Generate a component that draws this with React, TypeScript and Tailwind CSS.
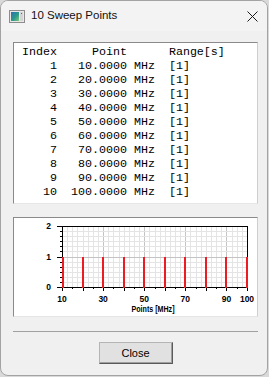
import React from "react";

// Sweep point rows shown in the list box (fixed-width text, like the original dialog)
const rows = Array.from({ length: 10 }, (_, i) => {
  const idx = String(i + 1).padStart(5, " ");
  const freq = ((i + 1) * 10).toFixed(4).padStart(8, " ");
  return `${idx}  ${freq} MHz  [1]`;
});

// chart geometry, in the coordinates of the chart box interior
const X0 = 48;
const X1 = 233;
const YTOP = 8;
const YBOT = 69;
const xOf = (mhz: number) => X0 + ((mhz - 10) * (X1 - X0)) / 90;
const yOf = (v: number) => YBOT - (v * (YBOT - YTOP)) / 2;
const px = (n: number) => Math.round(n) + 0.5;

function TitleIcon() {
  return (
    <svg width="16" height="13" viewBox="0 0 16 13">
      <defs>
        <linearGradient id="ig" x1="0" y1="0" x2="1" y2="1">
          <stop offset="0" stopColor="#2d6fb3" />
          <stop offset="0.55" stopColor="#2a9a8a" />
          <stop offset="1" stopColor="#7fc97a" />
        </linearGradient>
      </defs>
      <rect x="0.5" y="0.5" width="15" height="12" fill="#e8e8e8" stroke="#8c8c8c" />
      <rect x="2" y="2" width="8" height="9" fill="url(#ig)" />
      <rect x="11" y="2" width="3" height="9" fill="#d4d4d4" />
      <rect x="12" y="3" width="1" height="1" fill="#2d6fb3" />
    </svg>
  );
}

function SweepChart() {
  const vMinor: number[] = [];
  for (let m = 12.5; m < 100; m += 2.5) vMinor.push(m);
  const hMinor: number[] = [];
  for (let k = 1; k < 12; k++) hMinor.push(k / 6);
  const xTicks: number[] = [];
  for (let m = 10; m <= 100; m += 5) xTicks.push(m);
  const yTicks: number[] = [];
  for (let k = 0; k <= 12; k++) yTicks.push(k / 6);

  return (
    <svg width="243" height="98" viewBox="0 0 243 98" shapeRendering="crispEdges">
      {/* minor grid */}
      {vMinor.map((m) => (
        <line
          key={"v" + m}
          x1={px(xOf(m))}
          x2={px(xOf(m))}
          y1={YTOP}
          y2={YBOT}
          stroke={[30, 50, 70, 90].includes(m) ? "#c4c4c4" : "#e4e4e4"}
        />
      ))}
      {hMinor.map((v) => (
        <line
          key={"h" + v}
          x1={X0}
          x2={X1}
          y1={px(yOf(v))}
          y2={px(yOf(v))}
          stroke={Math.abs(v - 1) < 0.01 ? "#c4c4c4" : "#e4e4e4"}
        />
      ))}
      {/* frame */}
      <rect x={X0 + 0.5} y={YTOP + 0.5} width={X1 - X0} height={YBOT - YTOP} fill="none" stroke="#000" />
      {/* y ticks */}
      {yTicks.map((v, k) => (
        <line
          key={"yt" + k}
          x1={X0 - (k % 6 === 0 ? 5 : 2)}
          x2={X0}
          y1={px(yOf(v))}
          y2={px(yOf(v))}
          stroke="#000"
        />
      ))}
      {/* x ticks */}
      {xTicks.map((m) => (
        <line
          key={"xt" + m}
          x1={px(xOf(m))}
          x2={px(xOf(m))}
          y1={YBOT}
          y2={YBOT + (m % 10 === 0 ? 4 : 2)}
          stroke="#000"
        />
      ))}
      {/* bars */}
      {[10, 20, 30, 40, 50, 60, 70, 80, 90, 100].map((m) => (
        <rect
          key={"b" + m}
          x={Math.round(xOf(m)) - (m === 100 ? 1 : m === 10 ? 0 : 1)}
          y={Math.round(yOf(1))}
          width={m === 10 || m === 100 ? 1.5 : 2}
          height={YBOT - Math.round(yOf(1)) + 1}
          fill="#ed1c24"
        />
      ))}
      <g fontFamily="'Liberation Sans', Arial, sans-serif" fontSize="8.5" fontWeight="bold" fill="#000" shapeRendering="auto">
        {[2, 1, 0].map((v) => (
          <text key={"yl" + v} x={37} y={yOf(v) + 3} textAnchor="end">
            {v}
          </text>
        ))}
        {[10, 30, 50, 70, 90, 100].map((m) => (
          <text key={"xl" + m} x={xOf(m)} y={84} textAnchor="middle">
            {m}
          </text>
        ))}
        <text x={139} y={94} textAnchor="middle" textLength={43} lengthAdjust="spacingAndGlyphs">
          Points [MHz]
        </text>
      </g>
    </svg>
  );
}

export default function App() {
  return (
    <div className="w-[269px] h-[377px] bg-[#d9d9d9] overflow-hidden">
      <div className="w-[268px] h-[376px] flex flex-col bg-[#f0f0f0] border border-[#a3a3a3] rounded-[8px] overflow-hidden">
        {/* title bar */}
        <div className="h-[30px] shrink-0 bg-[#f3f3f3] flex items-center pl-[8px] pr-[9px]">
          <TitleIcon />
          <span className="ml-[6px] text-[11.5px] text-[#111] font-['Liberation_Sans',Arial,sans-serif]">
            10 Sweep Points
          </span>
          <svg className="ml-auto" width="11" height="11" viewBox="0 0 11 11">
            <path d="M0.5 0.5 L10.5 10.5 M10.5 0.5 L0.5 10.5" stroke="#1a1a1a" strokeWidth="1" />
          </svg>
        </div>

        <div className="flex flex-col pl-[12px]">
          {/* list box */}
          <div className="mt-[11px] w-[245px] h-[162px] bg-white border border-t-[#8a8a8a] border-l-[#8a8a8a] border-r-[#cfcfcf] border-b-[#e6e6e6] pl-[8px] pt-[2px]">
            <pre className="font-['Liberation_Mono','Courier_New',monospace] text-[11.67px] leading-[14px] text-black">
              {"Index     Point      Range[s]\n" + rows.join("\n")}
            </pre>
          </div>

          {/* chart box */}
          <div className="mt-[13px] w-[245px] h-[100px] bg-white border border-t-[#8a8a8a] border-l-[#8a8a8a] border-r-[#cfcfcf] border-b-[#e6e6e6]">
            <SweepChart />
          </div>

          {/* separator */}
          <div className="mt-[14px] w-[245px] h-px bg-[#a0a0a0]" />

          {/* close button */}
          <div className="w-[245px] flex justify-center pl-[0px] mt-[10px]">
            <button className="w-[74px] h-[22px] bg-[#e1e1e1] border border-t-[#b5b5b5] border-l-[#b5b5b5] border-r-[#5a5a5a] border-b-[#5a5a5a] shadow-[inset_-1px_-1px_0_#a0a0a0] text-[11px] text-black font-['Liberation_Sans',Arial,sans-serif] flex items-center justify-center">
              Close
            </button>
          </div>
        </div>
      </div>
    </div>
  );
}
